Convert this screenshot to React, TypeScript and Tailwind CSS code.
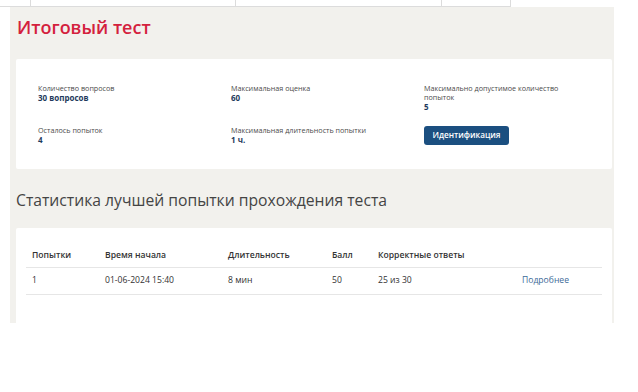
const info = [
  { label: "Количество вопросов", value: "30 вопросов" },
  { label: "Максимальная оценка", value: "60" },
  { label: "Максимально допустимое количество попыток", value: "5" },
  { label: "Осталось попыток", value: "4" },
  { label: "Максимальная длительность попытки", value: "1 ч." },
];

const cols = [
  { title: "Попытки", w: "w-[73px]" },
  { title: "Время начала", w: "w-[123px]" },
  { title: "Длительность", w: "w-[104px]" },
  { title: "Балл", w: "w-[46px]" },
  { title: "Корректные ответы", w: "w-[144px]" },
  { title: "", w: "w-[86px]" },
];

function Info({ label, value }: { label: string; value: string }) {
  return (
    <div className="max-w-[148px]">
      <div className="text-[7.2px] leading-[9px] text-[#4b4b4b]">{label}</div>
      <div className="text-[8px] leading-[9px] font-bold text-[#1e3a5c]">{value}</div>
    </div>
  );
}

export default function App() {
  return (
    <div className="w-[638px] h-[392px] bg-white font-['Open_Sans',sans-serif] text-[#333]">
      {/* top tabs strip */}
      <div className="flex h-[7px] w-[511px] border-b border-[#dcdcdc]">
        <div className="w-[31px] border-r border-[#dcdcdc]" />
        <div className="w-[205px] border-r border-[#dcdcdc]" />
        <div className="w-[206px] border-r border-[#dcdcdc]" />
        <div className="w-[69px] border-r border-[#dcdcdc]" />
      </div>

      <div className="ml-[10px] w-[604px] h-[316px] bg-[#f2f1ed] pl-[6px] pr-[2px] pt-[7px] flex flex-col">
        <h1 className="pl-[1px] text-[18px] leading-[27px] font-semibold text-[#d4213d]">Итоговый тест</h1>

        <div className="mt-[18px] bg-white rounded-[2px] pl-[22px] pt-[25px] pb-[24px] grid grid-cols-[193px_193px_1fr] gap-y-[15px] items-start">
          {info.slice(0, 3).map((i) => (
            <Info key={i.label} {...i} />
          ))}
          {info.slice(3).map((i) => (
            <Info key={i.label} {...i} />
          ))}
          <button className="w-[85px] h-[19px] rounded-[3px] bg-[#1b4f80] text-white text-[8.2px] font-semibold">
            Идентификация
          </button>
        </div>

        <h2 className="mt-[20px] text-[15.7px] leading-[23px] text-[#444]">
          Статистика лучшей попытки прохождения теста
        </h2>

        <div className="mt-[16px] flex-1 bg-white rounded-t-[2px] px-[10px] pt-[17px]">
          <table className="table-fixed border-collapse text-[8.6px] text-[#333]">
            <thead>
              <tr className="h-[22px] border-b border-[#e6e6e6]">
                {cols.map((c) => (
                  <th key={c.title} className={`${c.w} px-[6px] text-left font-semibold`}>
                    {c.title}
                  </th>
                ))}
              </tr>
            </thead>
            <tbody>
              <tr className="h-[27px] border-b border-[#e6e6e6]">
                <td className="px-[6px]">1</td>
                <td className="px-[6px]">01-06-2024 15:40</td>
                <td className="px-[6px]">8 мин</td>
                <td className="px-[6px]">50</td>
                <td className="px-[6px]">25 из 30</td>
                <td className="px-[6px] text-[#3d6a98]">Подробнее</td>
              </tr>
            </tbody>
          </table>
        </div>
      </div>
    </div>
  );
}
